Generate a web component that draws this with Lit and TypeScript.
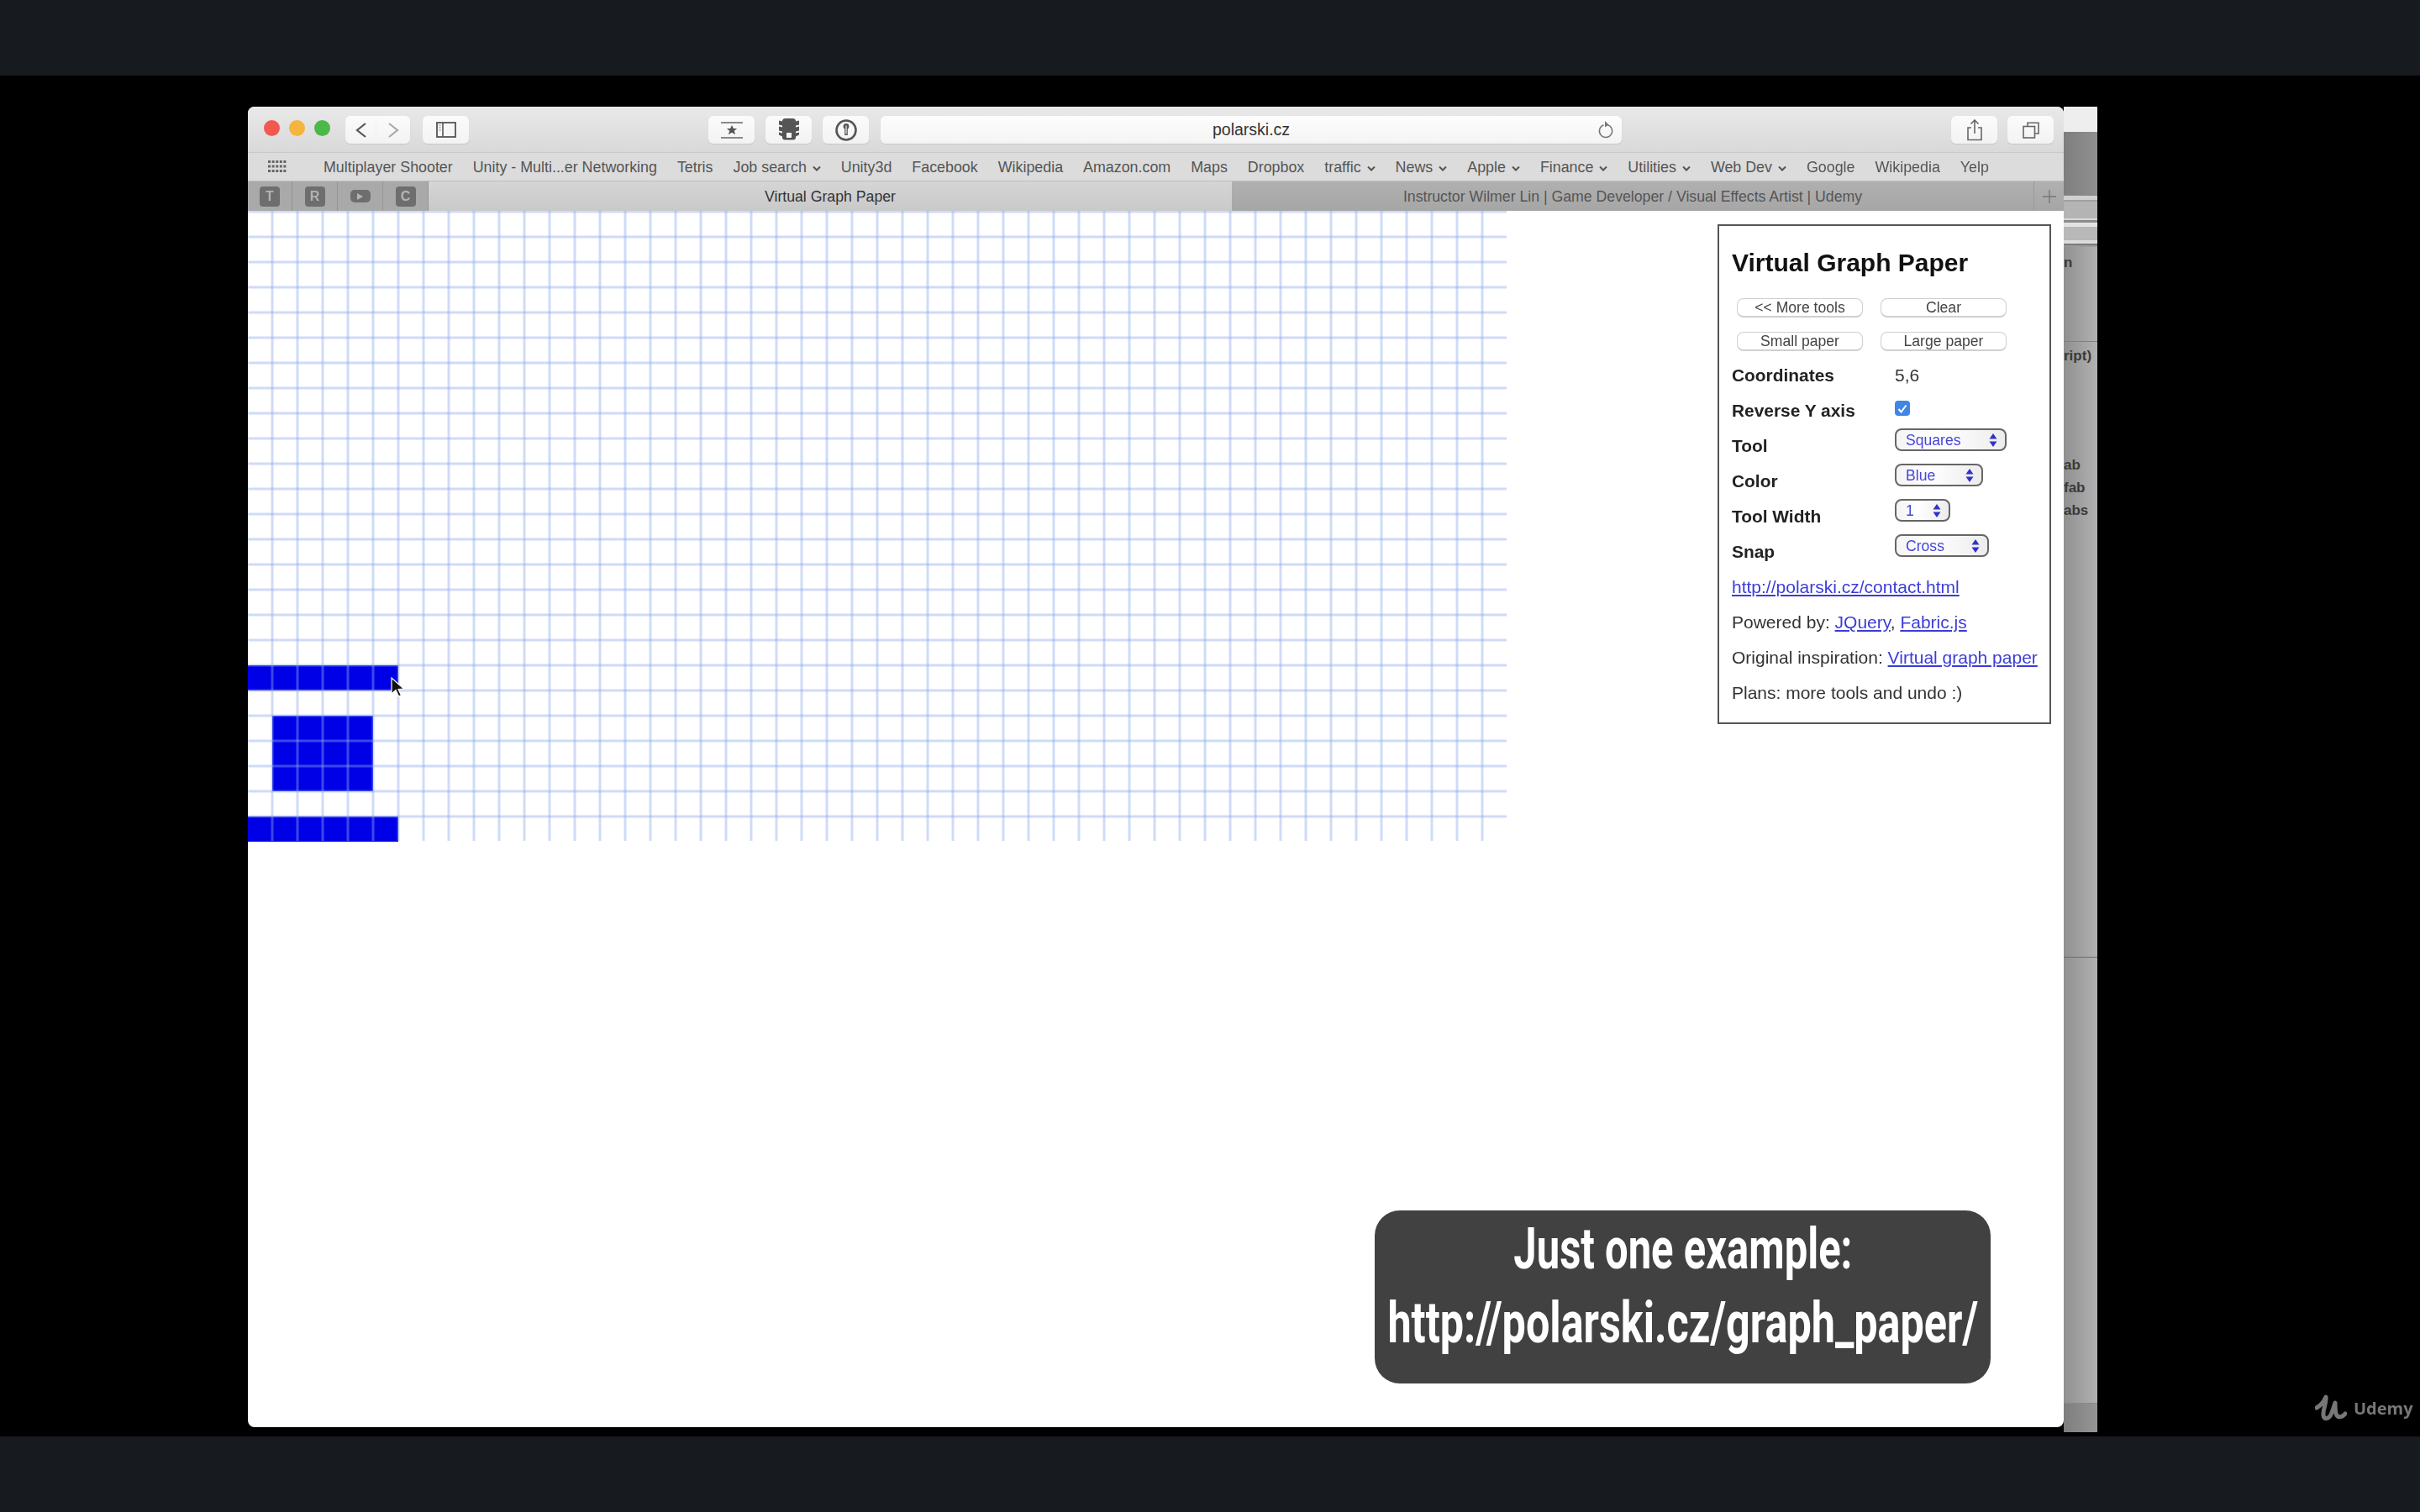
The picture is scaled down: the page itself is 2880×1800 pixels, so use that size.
import { LitElement, html, css, svg } from "lit";
import { customElement } from "lit/decorators.js";

const BOOKMARKS: [string, boolean][] = [
  ["Multiplayer Shooter", false],
  ["Unity - Multi...er Networking", false],
  ["Tetris", false],
  ["Job search", true],
  ["Unity3d", false],
  ["Facebook", false],
  ["Wikipedia", false],
  ["Amazon.com", false],
  ["Maps", false],
  ["Dropbox", false],
  ["traffic", true],
  ["News", true],
  ["Apple", true],
  ["Finance", true],
  ["Utilities", true],
  ["Web Dev", true],
  ["Google", false],
  ["Wikipedia", false],
  ["Yelp", false],
];

// col, row, width, height of the filled areas, in grid cells
const FILLED = [
  [0, 18, 6, 1],
  [1, 20, 4, 3],
  [0, 24, 6, 1],
];

const CELL = 30;
const COLS = 50;
const ROWS = 25;

const chevron = html`<svg class="chev" width="10" height="7" viewBox="0 0 10 7"><path d="M1 1.500l4 4 4-4" fill="none" stroke="#555" stroke-width="2"/></svg>`;

const arrows = html`<svg class="arrows" width="10" height="16" viewBox="0 0 10 16"><path d="M5 0L9.500 6.500H.5zM5 16L.5 9.500h9z" fill="#3232c8"/></svg>`;

@customElement("app-root")
export class AppRoot extends LitElement {
  static styles = css`
    :host {
      display: flex;
      flex-direction: column;
      width: 2880px;
      height: 1800px;
      background: #000;
      font-family: "Liberation Sans", Arial, sans-serif;
      position: relative;
      overflow: hidden;
    }
    .band {
      height: 90px;
      flex: none;
      background: #171a1f;
    }
    .desktop {
      flex: 1;
      display: flex;
      padding: 37px 0 0 295px;
      filter: blur(0.7px);
    }
    .window {
      width: 2161px;
      height: 1572px;
      display: flex;
      flex-direction: column;
      background: #fff;
      border-radius: 8px;
      overflow: hidden;
      position: relative;
      z-index: 1;
    }

    /* toolbar */
    .toolbar {
      height: 55px;
      flex: none;
      box-sizing: border-box;
      display: flex;
      align-items: flex-start;
      padding: 11px 13px 0 19px;
      background: linear-gradient(#e9e9e9, #d9d9d9);
      border-bottom: 1px solid #c8c8c8;
    }
    .lights {
      display: flex;
      gap: 11px;
      margin-top: 5px;
      margin-right: 18px;
    }
    .light {
      width: 19px;
      height: 19px;
      border-radius: 50%;
    }
    .btn {
      height: 33px;
      box-sizing: border-box;
      background: linear-gradient(#fbfbfb, #f3f3f3);
      border-radius: 6px;
      box-shadow: 0 1px 1px #c6c6c6;
      display: flex;
      align-items: center;
      justify-content: center;
      flex: none;
    }
    .back { width: 37px; border-radius: 6px 0 0 6px; }
    .forward { width: 40px; border-radius: 0 6px 6px 0; margin-right: 15px; margin-left: 0; }
    .side { width: 55px; margin-right: 285px; }
    .ext { width: 55px; margin-right: 13px; }
    .address {
      width: 882px;
      height: 33px;
      margin-left: 1px;
      margin-right: 392px;
      background: linear-gradient(#fdfdfd, #f4f4f4);
      border-radius: 6px;
      box-shadow: 0 1px 1px #c6c6c6;
      display: flex;
      align-items: center;
      padding: 0 9px 0 29px;
      box-sizing: border-box;
      flex: none;
    }
    .address span {
      flex: 1;
      text-align: center;
      font-size: 19.5px;
      color: #333;
    }

    /* bookmarks */
    .bookmarks {
      height: 34px;
      flex: none;
      box-sizing: border-box;
      display: flex;
      align-items: center;
      padding: 2px 0 0 24px;
      background: #dcdcdc;
      border-bottom: 1px solid #bdbdbd;
      font-size: 17.85px;
      color: #555;
    }
    .apps {
      margin-right: 44px;
      margin-top: -2px;
      flex: none;
    }
    .marks {
      display: flex;
      gap: 24px;
      white-space: nowrap;
    }
    .mark {
      display: flex;
      align-items: center;
      gap: 7px;
    }
    .chev { margin-top: 1px; }

    /* tabs */
    .tabs {
      height: 35px;
      flex: none;
      display: flex;
      font-size: 17.7px;
      color: #444;
      background: #aaa;
      box-shadow: inset 0 -1px 0 #a0a0a0;
    }
    .pin {
      width: 54px;
      box-sizing: border-box;
      flex: none;
      display: flex;
      align-items: center;
      justify-content: center;
      background: #a9a9a9;
      border-right: 1px solid #949494;
    }
    .pin:first-child { width: 53px; }
    .pin b {
      width: 24px;
      height: 24px;
      border-radius: 4px;
      background: #6e6e6e;
      color: #b4b4b4;
      font-size: 16px;
      line-height: 24px;
      text-align: center;
    }
    .pin i {
      display: flex;
      align-items: center;
      justify-content: center;
      width: 24px;
      height: 15px;
      border-radius: 5px;
      background: #6e6e6e;
    }
    .tab {
      display: flex;
      align-items: center;
      justify-content: center;
      padding-top: 1px;
      white-space: nowrap;
    }
    .tab.active {
      width: 956px;
      background: linear-gradient(#d5d5d5, #c9c9c9);
      color: #333;
    }
    .tab.other {
      flex: 1;
      background: linear-gradient(#b0b0b0, #a6a6a6);
      color: #555;
    }
    .plus {
      width: 35px;
      flex: none;
      display: flex;
      align-items: center;
      justify-content: center;
      background: linear-gradient(#b0b0b0, #a6a6a6);
      border-left: 1px solid #999;
    }

    /* page */
    .page {
      flex: 1;
      display: flex;
      justify-content: space-between;
      align-items: flex-start;
      padding-right: 15px;
      position: relative;
    }
    .paper {
      position: relative;
      width: 1498px;
      height: 752px;
      flex: none;
    }
    .paper svg { display: block; }
    .cursor {
      position: absolute;
      left: 169px;
      top: 554px;
    }
    .panel {
      width: 397px;
      box-sizing: border-box;
      margin-top: 16px;
      border: 2px solid #555;
      padding: 0 0 14px 15px;
      color: #333;
      font-size: 21px;
    }
    h1 {
      margin: 0;
      height: 86px;
      font-size: 30px;
      line-height: 88px;
      color: #111;
      font-weight: bold;
      white-space: nowrap;
    }
    .buttons {
      display: grid;
      grid-template-columns: 150px 150px;
      grid-auto-rows: 23px;
      column-gap: 21px;
      row-gap: 17px;
      padding-left: 6px;
      margin-bottom: 8px;
    }
    .pbtn {
      border: 1px solid #cfcfcf;
      border-bottom-width: 2px;
      border-radius: 8px;
      background: #fff;
      box-sizing: border-box;
      font-size: 17.6px;
      line-height: 20px;
      color: #444;
      text-align: center;
    }
    .row {
      display: grid;
      grid-template-columns: 194px 1fr;
      height: 42px;
      line-height: 42px;
    }
    .row label {
      font-weight: bold;
      font-size: 20.9px;
      color: #222;
    }
    .check {
      width: 18px;
      height: 18px;
      margin-top: 9px;
      border-radius: 4px;
      background: #3f86e6;
      display: flex;
      align-items: center;
      justify-content: center;
    }
    .select {
      height: 27px;
      box-sizing: border-box;
      border: 2px solid #666;
      border-radius: 8px;
      background: linear-gradient(90deg, #f4f4f4, #fff 40%, #ececec);
      color: #4646d8;
      font-size: 17.6px;
      line-height: 22px;
      padding: 0 9px 0 11px;
      display: flex;
      justify-content: space-between;
      align-items: center;
    }
    .line {
      height: 42px;
      line-height: 42px;
      white-space: nowrap;
    }
    a {
      color: #3c3cd8;
      text-decoration: underline;
    }
    .note {
      position: absolute;
      left: 1341px;
      top: 1190px;
      width: 733px;
      height: 206px;
      border-radius: 30px;
      background: #414141;
      color: #fff;
      font-family: Roboto, "Liberation Sans", sans-serif;
      font-weight: 700;
      font-size: 68px;
      line-height: 88px;
      padding-top: 2px;
      box-sizing: border-box;
    }
    .note div {
      display: flex;
      justify-content: center;
      white-space: nowrap;
    }
    .note span {
      flex: none;
      transform: scaleX(0.72);
    }
    .note span.url {
      transform: scaleX(0.74);
    }

    /* window behind */
    .behind {
      width: 40px;
      height: 1578px;
      flex: none;
      overflow: hidden;
      display: flex;
      flex-direction: column;
      font-size: 17px;
      font-weight: bold;
      color: #3a3a3a;
      background: linear-gradient(90deg, #8f8f8f, #b2b2b2);
    }
    .b-top { height: 30px; background: #eeeeee; flex: none; }
    .b-dark { height: 75px; background: linear-gradient(90deg, #7e7e7e, #909090); flex: none; }
    .b-strips {
      height: 62px;
      flex: none;
      background: linear-gradient(#8a8a8a 0 1px, #d0d0d0 1px 6px, #a0a0a0 6px 8px, #b4b4b4 8px 28px, #d8d8d8 28px 30px, #8c8c8c 30px 33px, #e2e2e2 33px 38px, #b8b8b8 38px 54px, #dcdcdc 54px 58px, #7a7a7a 58px 60px, #9a9a9a 60px);
    }
    .b-text {
      flex: none;
      height: 113px;
      padding-top: 9px;
      box-sizing: border-box;
      border-bottom: 1px solid #808080;
      line-height: 20px;
    }
    .b-list {
      flex: none;
      height: 733px;
      box-sizing: border-box;
      padding-top: 3px;
      border-bottom: 1px solid #6c6c6c;
      line-height: 27px;
      white-space: nowrap;
    }
    .b-list div { height: 27px; }
    .b-list .b-gap { height: 103px; }
    .b-fill { flex: 1; }
    .b-foot {
      height: 34px;
      flex: none;
      background: linear-gradient(90deg, #7e7e7e, #959595);
      border-top: 1px solid #8a8a8a;
    }
    .udemy {
      position: absolute;
      left: 2755px;
      top: 1660px;
      display: flex;
      align-items: center;
      gap: 8px;
      color: #777;
      font-family: "Open Sans", "Liberation Sans", sans-serif;
      font-weight: 700;
      font-size: 20px;
      filter: blur(0.5px);
    }
  `;

  paper() {
    const w = COLS * CELL;
    const h = ROWS * CELL;
    const v = [];
    const hz = [];
    for (let c = 1; c < COLS; c++) {
      v.push(svg`<line x1=${c * CELL - 1} y1="0" x2=${c * CELL - 1} y2=${h}/>`);
    }
    for (let r = 0; r < ROWS; r++) {
      hz.push(svg`<line x1="0" y1=${r * CELL + 1} x2=${w} y2=${r * CELL + 1}/>`);
    }
    return html`<svg width=${w - 2} height=${h + 2} viewBox="0 0 ${w - 2} ${h + 2}">
      ${FILLED.map(([c, r, cw, ch]) => svg`<rect x=${c * CELL - 1} y=${r * CELL + 1} width=${cw * CELL} height=${ch * CELL} fill="#0000e6"/>`)}
      <g stroke="rgba(140,170,235,0.42)" stroke-width="3">${v}${hz}</g>
    </svg>`;
  }

  render() {
    return html`
      <div class="band"></div>
      <div class="desktop">
        <div class="window">
          <div class="toolbar">
            <div class="lights">
              <div class="light" style="background:#f2584f"></div>
              <div class="light" style="background:#f5b53c"></div>
              <div class="light" style="background:#4cb84a"></div>
            </div>
            <div class="btn back"><svg width="14" height="20" viewBox="0 0 14 20"><path d="M12 2L2 10l10 8" fill="none" stroke="#555" stroke-width="2.2"/></svg></div>
            <div class="btn forward"><svg width="14" height="20" viewBox="0 0 14 20"><path d="M2 2l10 8-10 8" fill="none" stroke="#aaa" stroke-width="2.2"/></svg></div>
            <div class="btn side"><svg width="24" height="19" viewBox="0 0 24 19"><rect x="1" y="1" width="22" height="17" fill="none" stroke="#555" stroke-width="1.8"/><path d="M8 1v17" stroke="#555" stroke-width="1.6"/><path d="M3 4h3M3 7h3M3 10h3" stroke="#999" stroke-width="1.2"/></svg></div>
            <div class="btn ext"><svg width="28" height="22" viewBox="0 0 28 22"><path d="M1 2h26M1 20h26" stroke="#666" stroke-width="1.6"/><path d="M14 5l1.9 4h4.3l-3.4 2.8 1.3 4.4-4.1-2.5-4.1 2.5 1.3-4.4L7.8 9h4.3z" fill="#555"/></svg></div>
            <div class="btn ext"><svg width="26" height="27" viewBox="0 0 26 27"><path d="M5 2.5a3 3 0 0 1 3-2.5h10a3 3 0 0 1 3 2.5l0 1 4-1v5l-4 1v2l4-1v5l-4 1v2l4-1v3l-4 2v1a3 3 0 0 1-3 3H8a3 3 0 0 1-3-3v-1l-4-2v-3l4 1v-2l-4-1v-5l4 1v-2l-4-1v-5l4 1zM10 17v6h6v-6z" fill="#555" fill-rule="evenodd"/></svg></div>
            <div class="btn ext"><svg width="28" height="28" viewBox="0 0 28 28"><circle cx="14" cy="14" r="11.5" fill="none" stroke="#555" stroke-width="2.6"/><circle cx="14" cy="9.5" r="3.4" fill="#555"/><path d="M12.2 10h3.6v10h-3.6z" fill="#555"/><path d="M13.4 8.5h1.2v10h-1.2z" fill="#eee"/></svg></div>
            <div class="address">
              <span>polarski.cz</span>
              <svg width="20" height="22" viewBox="0 0 20 22"><path d="M12 4.6a7.6 7.6 0 1 1-4.6.2" fill="none" stroke="#777" stroke-width="1.5"/><path d="M9 0l4.6 4.4L9 7.6z" fill="#777"/></svg>
            </div>
            <div class="btn ext" style="margin-right:12px"><svg width="20" height="26" viewBox="0 0 20 26"><path d="M6 10H2v14.500h16V10h-4" fill="none" stroke="#666" stroke-width="1.6"/><path d="M10 1v16M5.500 5.500L10 1l4.500 4.500" fill="none" stroke="#666" stroke-width="1.600"/></svg></div>
            <div class="btn ext" style="margin-right:0"><svg width="20" height="20" viewBox="0 0 20 20"><path d="M6 5V1.200h13V14h-4" fill="none" stroke="#666" stroke-width="1.6"/><rect x="1" y="5.500" width="13.500" height="13.500" fill="none" stroke="#666" stroke-width="1.6"/></svg></div>
          </div>

          <div class="bookmarks">
            <svg class="apps" width="22" height="17" viewBox="0 0 22 17" fill="#666">
              ${[1, 6.500, 12].map((y) => [0, 4.600, 9.200, 13.800, 18.400].map((x) => svg`<rect x=${x} y=${y} width="3" height="3"/>`))}
            </svg>
            <div class="marks">
              ${BOOKMARKS.map(([name, menu]) => html`<span class="mark">${name}${menu ? chevron : ""}</span>`)}
            </div>
          </div>

          <div class="tabs">
            <div class="pin"><b>T</b></div>
            <div class="pin"><b>R</b></div>
            <div class="pin"><i><svg width="7" height="8" viewBox="0 0 7 8"><path d="M0 0l7 4-7 4z" fill="#b4b4b4"/></svg></i></div>
            <div class="pin"><b>C</b></div>
            <div class="tab active">Virtual Graph Paper</div>
            <div class="tab other">Instructor Wilmer Lin | Game Developer / Visual Effects Artist | Udemy</div>
            <div class="plus"><svg width="18" height="18" viewBox="0 0 18 18"><path d="M9 1v16M1 9h16" stroke="#777" stroke-width="1.400"/></svg></div>
          </div>

          <div class="page">
            <div class="paper">
              ${this.paper()}
              <svg class="cursor" width="18" height="26" viewBox="0 0 18 26"><path d="M2 2v19l5-4.500 3.500 7.500 3-1.300-3.500-7.200 6.500-.5z" fill="#111" stroke="#fff" stroke-width="1.200"/></svg>
            </div>
            <div class="panel">
              <h1>Virtual Graph Paper</h1>
              <div class="buttons">
                <div class="pbtn">&lt;&lt; More tools</div>
                <div class="pbtn">Clear</div>
                <div class="pbtn">Small paper</div>
                <div class="pbtn">Large paper</div>
              </div>
              <div class="row"><label>Coordinates</label><span>5,6</span></div>
              <div class="row"><label>Reverse Y axis</label>
                <div class="check"><svg width="12" height="11" viewBox="0 0 12 11"><path d="M1.500 6l3 3.500L10.500 1.500" fill="none" stroke="#fff" stroke-width="2"/></svg></div>
              </div>
              <div class="row"><label>Tool</label><div class="select" style="width:133px">Squares ${arrows}</div></div>
              <div class="row"><label>Color</label><div class="select" style="width:105px">Blue ${arrows}</div></div>
              <div class="row"><label>Tool Width</label><div class="select" style="width:66px">1 ${arrows}</div></div>
              <div class="row"><label>Snap</label><div class="select" style="width:112px">Cross ${arrows}</div></div>
              <div class="line"><a href="#">http://polarski.cz/contact.html</a></div>
              <div class="line">Powered by: <a href="#">JQuery</a>, <a href="#">Fabric.js</a></div>
              <div class="line">Original inspiration: <a href="#">Virtual graph paper</a></div>
              <div class="line">Plans: more tools and undo :)</div>
            </div>
            <div class="note">
              <div><span>Just one example:</span></div>
              <div><span class="url">http://polarski.cz/graph_paper/</span></div>
            </div>
          </div>
        </div>

        <div class="behind">
          <div class="b-top"></div>
          <div class="b-dark"></div>
          <div class="b-strips"></div>
          <div class="b-text">n</div>
          <div class="b-list">
            <div>ript)</div>
            <div class="b-gap"></div>
            <div>ab</div>
            <div>fab</div>
            <div>abs</div>
          </div>
          <div class="b-fill"></div>
          <div class="b-foot"></div>
        </div>
      </div>
      <div class="band"></div>
      <div class="udemy">
        <svg width="38" height="33" viewBox="0 0 38 33"><path d="M2 16C7 13 11 8 13 3c1 8-4 15-3 22 .7 5 6 5 9-1 2-4 3-8 5-14 0 6 0 12 2 15 2 3 7 2 10-2" fill="none" stroke="#777" stroke-width="5" stroke-linecap="round" stroke-linejoin="round"/></svg>
        <span>Udemy</span>
      </div>
    `;
  }
}
